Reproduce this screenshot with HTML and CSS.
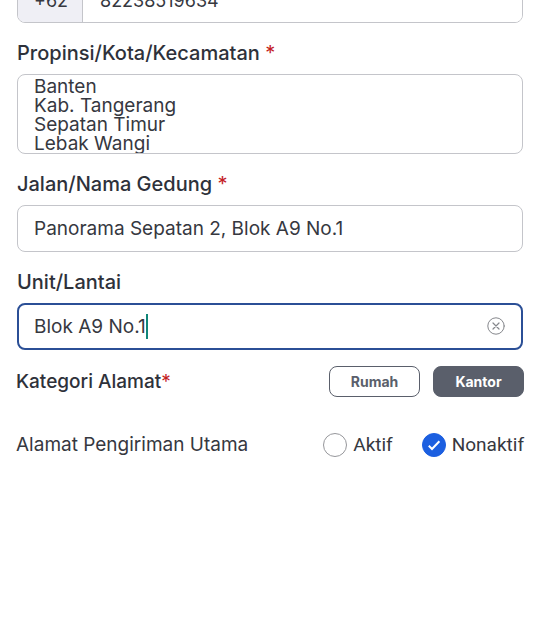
FILE: index.html
```
<!DOCTYPE html>
<html lang="id">
<head>
  <meta charset="UTF-8">
  <meta name="viewport" content="width=device-width, initial-scale=1">
  <title>Ubah Alamat</title>
  <link rel="stylesheet" href="styles.css">
</head>
<body>

  <form class="address-form">
    <div class="fields">
      <div class="phone">
        <label class="phone-code" for="phone">+62</label>
        <input type="tel" id="phone" class="phone-input" value="82238519634">
      </div>

      <div class="field">
        <label for="region">Propinsi/Kota/Kecamatan <span class="required">*</span></label>
        <textarea id="region" class="input region" rows="4">Banten
Kab. Tangerang
Sepatan Timur
Lebak Wangi</textarea>
      </div>

      <div class="field">
        <label for="street">Jalan/Nama Gedung <span class="required">*</span></label>
        <input type="text" id="street" class="input" value="Panorama Sepatan 2, Blok A9 No.1">
      </div>

      <div class="field">
        <label for="unit">Unit/Lantai</label>
        <div class="unit">
          <input type="text" id="unit" class="input active" value="Blok A9 No.1">
          <span class="caret"></span>
          <button type="button" class="clear" aria-label="Hapus">
            <svg width="18" height="18" viewBox="0 0 18 18" fill="none" stroke="#85878c" stroke-linecap="round">
              <circle cx="9" cy="9" r="8.2"/>
              <path d="M6 6l6 6M12 6l-6 6" stroke-width="1.2"/>
            </svg>
          </button>
        </div>
      </div>
    </div>

    <div class="row category">
      <span class="row-title">Kategori Alamat<span class="required">*</span></span>
      <div class="category-buttons">
        <button type="button" class="category-btn">Rumah</button>
        <button type="button" class="category-btn selected">Kantor</button>
      </div>
    </div>

    <div class="row">
      <span>Alamat Pengiriman Utama</span>
      <div class="options">
        <label class="option"><input type="radio" name="main" value="1">Aktif</label>
        <label class="option">
          <input type="radio" name="main" value="0" checked>
          <svg class="check" width="24" height="24" viewBox="0 0 24 24" fill="none" stroke="#fff" stroke-width="2">
            <path d="M6.8 12.8l3.2 3.2L17.4 8.2"/>
          </svg>
          Nonaktif
        </label>
      </div>
    </div>
  </form>

</body>
</html>
```

FILE: styles.css
```
* {
  box-sizing: border-box;
}

body {
  margin: 0;
  background: #fff;
  color: #36383f;
  font-family: Inter, "Noto Sans", sans-serif;
  font-size: 19px;
  line-height: 24px;
}

input, textarea, button {
  font: inherit;
  color: inherit;
  margin: 0;
}

/* the page is scrolled, the phone field is half out of view */
.address-form {
  margin-top: -24px;
  padding: 0 16px;
}

.fields {
  padding: 0 1px;
}

.phone {
  display: flex;
  height: 47px;
  border: 1px solid #c4c5ca;
  border-radius: 8px;
  font-size: 18px;
  overflow: hidden;
}

.phone-code {
  width: 65px;
  padding: 12px 0 0 16px;
  background: #efeff5;
  border-right: 1px solid #c4c5ca;
}

.phone-input {
  flex: 1;
  min-width: 0;
  padding: 2px 17px 0;
  border: none;
  outline: none;
}

.field {
  display: flex;
  flex-direction: column;
  gap: 9px;
  margin-top: 18px;
}

.field label {
  font-size: 20px;
}

.field label,
.row-title {
  font-weight: 500;
  color: #2e313a;
}

.required {
  color: #c4211f;
  font-weight: 400;
}

.input {
  width: 100%;
  height: 47px;
  padding: 0 16px;
  border: 1px solid #c4c5ca;
  border-radius: 8px;
  background: #fff;
  outline: none;
}

.region {
  height: auto;
  padding-top: 2px;
  padding-bottom: 0;
  line-height: 19px;
  resize: none;
  overflow: hidden;
}

.unit {
  position: relative;
}

.unit .active {
  display: block;
  padding: 0 48px 0 15px;
  border: 2px solid #2b4f96;
  caret-color: transparent;
}

.caret {
  position: absolute;
  left: 129px;
  top: 11px;
  width: 2px;
  height: 25px;
  background: #0f8577;
}

.clear {
  position: absolute;
  right: 18px;
  top: 14px;
  display: flex;
  padding: 0;
  border: none;
  background: none;
  cursor: pointer;
}

.row {
  display: flex;
  justify-content: space-between;
  align-items: center;
  margin-top: 36px;
}

.category {
  margin-top: 16px;
}

.category-buttons {
  display: flex;
  gap: 13px;
}

.category-btn {
  width: 91px;
  height: 31px;
  padding: 0;
  border: 1px solid #5a5f6b;
  border-radius: 8px;
  background: #fff;
  color: #5a5f6b;
  font-size: 14px;
  font-weight: 700;
  cursor: pointer;
}

.category-btn.selected {
  background: #5a5f6b;
  color: #fff;
}

.options {
  display: flex;
  gap: 29px;
}

.option {
  position: relative;
  display: flex;
  align-items: center;
  gap: 6px;
  font-family: Roboto, sans-serif;
  font-size: 19px;
}

.option input {
  appearance: none;
  width: 24px;
  height: 24px;
  border: 1px solid #96979b;
  border-radius: 50%;
}

.option input:checked {
  background: #1c5fe0;
  border-color: #1c5fe0;
}

.check {
  position: absolute;
  left: 0;
  top: 0;
}
```
